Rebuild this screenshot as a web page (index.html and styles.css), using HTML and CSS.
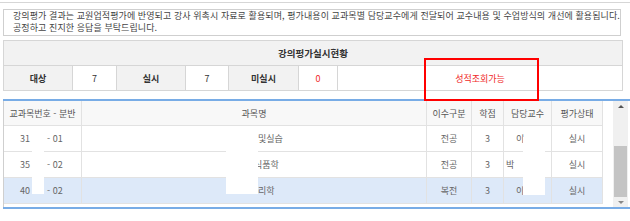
FILE: index.html
```html
<!DOCTYPE html>
<html lang="ko">
<head>
    <meta charset="UTF-8">
    <title>강의평가</title>
    <link rel="stylesheet" href="styles.css">
</head>
<body>
<div class="page">
    <div class="topline"></div>

    <!-- 안내문 -->
    <div class="notice">
        <p>강의평가 결과는 교원업적평가에 반영되고 강사 위촉시 자료로 활용되며, 평가내용이 교과목별 담당교수에게 전달되어 교수내용 및 수업방식의 개선에 활용됩니다.</p>
        <p>공정하고 진지한 응답을 부탁드립니다.</p>
    </div>

    <!-- 실시현황 -->
    <table class="summary">
        <colgroup>
            <col class="w-label"><col class="w-num"><col class="w-label"><col class="w-num2"><col class="w-label2"><col class="w-num3"><col>
        </colgroup>
        <tr>
            <th colspan="7" class="summary-title">강의평가실시현황</th>
        </tr>
        <tr>
            <th>대상</th>
            <td>7</td>
            <th>실시</th>
            <td>7</td>
            <th>미실시</th>
            <td class="red">0</td>
            <td class="red">성적조회가능</td>
        </tr>
    </table>

    <!-- 과목 목록 -->
    <div class="grid">
        <div class="grid-body">
            <table class="list">
                <colgroup>
                    <col class="c1"><col class="c2"><col class="c3"><col class="c4"><col class="c5"><col class="c6">
                </colgroup>
                <thead>
                    <tr>
                        <th>교과목번호 - 분반</th>
                        <th>과목명</th>
                        <th>이수구분</th>
                        <th>학점</th>
                        <th>담당교수</th>
                        <th>평가상태</th>
                    </tr>
                </thead>
                <tbody>
                    <tr>
                        <td class="code">31<span class="gap"></span>- 01</td>
                        <td class="name">및실습</td>
                        <td>전공</td>
                        <td>3</td>
                        <td class="prof">이</td>
                        <td>실시</td>
                    </tr>
                    <tr>
                        <td class="code">35<span class="gap"></span>- 02</td>
                        <td class="name shift">식품학</td>
                        <td>전공</td>
                        <td>3</td>
                        <td class="prof shift">박</td>
                        <td>실시</td>
                    </tr>
                    <tr class="selected">
                        <td class="code">40<span class="gap"></span>- 02</td>
                        <td class="name">리학</td>
                        <td>복전</td>
                        <td>3</td>
                        <td class="prof">이</td>
                        <td>실시</td>
                    </tr>
                </tbody>
            </table>
        </div>
        <div class="grid-gap"></div>
        <div class="scrollbar">
            <div class="sb-btn"><span class="arrow up"></span></div>
            <div class="sb-track"></div>
            <div class="sb-thumb"></div>
            <div class="sb-btn"><span class="arrow down"></span></div>
        </div>

        <!-- 가림 처리 -->
        <span class="mask mask-code"></span>
        <span class="mask mask-name"></span>
        <span class="mask mask-prof"></span>
    </div>

    <div class="mark"></div>
</div>
</body>
</html>
```

FILE: styles.css
```css
body {
    margin: 0;
    background: #fff;
    font-family: "Noto Sans CJK KR", "Noto Sans", sans-serif;
    font-size: 9px;
    color: #444;
}

.page {
    position: relative;
    width: 630px;
    height: 221px;
    overflow: hidden;
}

.topline {
    height: 2px;
    border-bottom: 1px solid #d6d6d6;
}

/* Notice */
.notice {
    margin: 6px 9px 0 3px;
    border: 1px solid #cfcfcf;
    padding: 0 0 1px 9px;
    line-height: 12px;
    letter-spacing: 0.08px;
    white-space: nowrap;
}

.notice p {
    margin: 0;
}

/* Summary table */
.summary {
    margin: 4px 0 0 3px;
    width: 620px;
    border-collapse: collapse;
    table-layout: fixed;
}

.summary th,
.summary td {
    border: 1px solid #d6d6d6;
    height: 24px;
    padding: 0;
    text-align: center;
    color: #333;
}

.summary th {
    background: #f2f2f2;
    font-weight: bold;
}

.summary .summary-title {
    font-size: 9.5px;
}

.summary td.red {
    color: #f02828;
}

.w-label { width: 69px; }
.w-num { width: 44px; }
.w-num2 { width: 43px; }
.w-label2 { width: 70px; }
.w-num3 { width: 39px; }

/* Grid */
.grid {
    position: relative;
    display: flex;
    margin: 8px 0 0 3px;
    width: 627px;
    height: 106px;
    border-top: 2px solid #78ace6;
    border-bottom: 2px solid #78ace6;
}

.grid-body {
    width: 600px;
    box-sizing: border-box;
    border-left: 1px solid #cfcfcf;
}

.list {
    width: 599px;
    table-layout: fixed;
    border-collapse: separate;
    border-spacing: 0;
}

.c1 { width: 78px; }
.c2 { width: 345px; }
.c3 { width: 45px; }
.c4 { width: 32px; }
.c5 { width: 48px; }
.c6 { width: 51px; }

.list th,
.list td {
    padding: 0;
    border-right: 1px solid #e2e2e2;
    border-bottom: 1px solid #e2e2e2;
    text-align: center;
    white-space: nowrap;
    overflow: hidden;
}

.list thead tr {
    height: 25px;
}

.list tbody tr {
    height: 26px;
}

.list th {
    background: #f8f8f8;
    font-weight: normal;
    color: #555;
}

.list td {
    color: #666;
}

.list tr.selected td {
    background: #dde9f9;
}

.list td.code {
    text-align: left;
    padding-left: 16px;
}

.code .gap {
    display: inline-block;
    width: 17px;
}

.list td.name {
    text-align: left;
    padding-left: 176px;
}

.list td.name.shift {
    padding-left: 172px;
}

.list td.prof {
    text-align: left;
    padding-left: 12px;
}

.list td.prof.shift {
    padding-left: 2px;
}

.grid-gap {
    width: 10px;
}

/* Scrollbar */
.scrollbar {
    width: 15px;
    display: flex;
    flex-direction: column;
    background: #f0f0f0;
}

.sb-btn {
    height: 10px;
    display: flex;
    justify-content: center;
    align-items: center;
}

.sb-track {
    height: 35px;
}

.sb-thumb {
    height: 51px;
    margin: 0 1px;
    background: #c4c4c4;
}

.arrow {
    width: 0;
    height: 0;
    border-left: 3px solid transparent;
    border-right: 3px solid transparent;
}

.arrow.up {
    border-bottom: 3px solid #555;
}

.arrow.down {
    border-top: 3px solid #888;
}

/* Redaction boxes */
.mask {
    position: absolute;
    top: 34px;
    height: 59px;
    background: #fff;
}

.mask-code {
    left: 29px;
    width: 12px;
}

.mask-name {
    left: 223px;
    width: 32px;
}

.mask-prof {
    left: 520px;
    width: 22px;
    top: 36px;
    height: 58px;
}

/* Red highlight */
.mark {
    position: absolute;
    left: 424px;
    top: 58px;
    width: 115px;
    height: 43px;
    box-sizing: border-box;
    border: 2px solid #ff0000;
}
```
